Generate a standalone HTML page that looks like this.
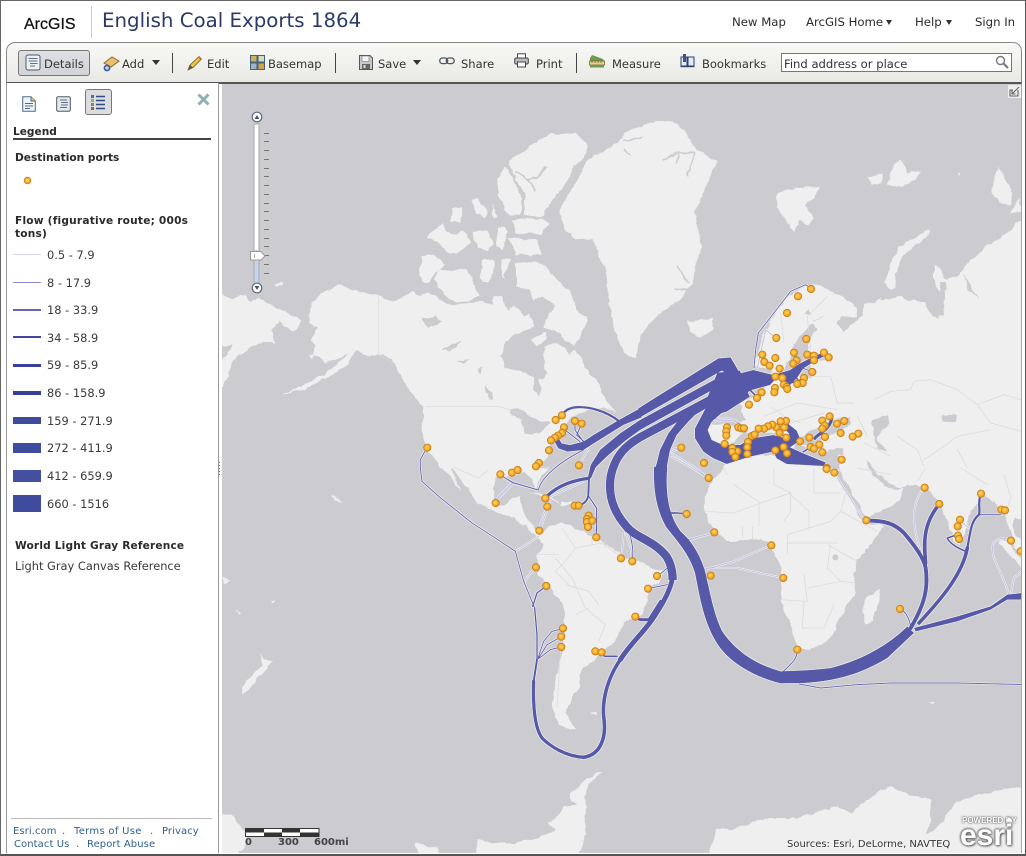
<!DOCTYPE html>
<html lang="en">
<head>
<meta charset="utf-8">
<title>English Coal Exports 1864</title>
<style>
html,body{margin:0;padding:0;background:#fff}
body{width:1026px;height:856px;position:relative;overflow:hidden;font-family:"DejaVu Sans","Liberation Sans",sans-serif;color:#333}
.a{position:absolute}
.t{position:absolute;white-space:nowrap;line-height:14px}
.frame{left:0;top:0;width:1024px;height:853px;border:1px solid #666;border-bottom:2px solid #555;border-right:1px solid #555}
.arc{left:24px;top:16px;font:16px/18px "Liberation Sans",sans-serif;color:#111;-webkit-text-stroke:.25px #111}
.sep0{left:91px;top:6px;width:1px;height:32px;background:#ccc}
.title{left:102px;top:9px;font-size:19.8px;line-height:24px;color:#2b3a67}
.nav{font-size:11.7px;color:#2a2a2a;top:15px}
.arrow{width:0;height:0;border-left:3.5px solid transparent;border-right:3.5px solid transparent;border-top:5px solid #333}
.toolbar{left:6px;top:42px;width:1014px;height:39px;border:1px solid #888;border-bottom:2px solid #555;border-radius:9px 9px 0 0;background:linear-gradient(#f8f8f6,#e9e9e4)}
.tb{font-size:11.5px;color:#333;top:57px}
.btn{left:18px;top:50px;width:70px;height:24px;border:1.5px solid #777;border-radius:3px;background:linear-gradient(#dfe0e3,#d2d3d7)}
.vs{top:53px;width:1px;height:20px;background:#444}
.search{left:781px;top:53px;width:229px;height:17px;border:1px solid #777;background:#fff}
.side{left:6px;top:83px;width:211px;height:770px;background:#fff;border-left:1px solid #999;border-right:1px solid #999}
.legend{font-size:11.4px;left:47px;color:#3a3a3a}
.b{font-size:10.6px;font-weight:bold;color:#2a2a2a}
.sw{left:13px;width:28px}
.foot{font-size:10px;letter-spacing:.08px;color:#31608f}
.icon{position:absolute;display:block}
</style>
</head>
<body>
<!-- MAP -->
<svg class="a" style="left:0;top:0" width="1026" height="856" viewBox="0 0 1026 856" xmlns="http://www.w3.org/2000/svg">
<defs>
<clipPath id="mc"><rect x="222" y="83" width="799" height="770"/></clipPath>
<radialGradient id="mg" cx=".45" cy=".45" r=".6"><stop offset="0" stop-color="#ffdc62"/><stop offset=".6" stop-color="#f5a92a"/><stop offset="1" stop-color="#d98a18"/></radialGradient>
<filter id="halo" filterUnits="userSpaceOnUse" x="0" y="0" width="1026" height="856">
<feMorphology in="SourceAlpha" operator="dilate" radius=".65" result="d"/>
<feFlood flood-color="#f2f2f2" result="f"/>
<feComposite in="f" in2="d" operator="in" result="h"/>
<feMerge><feMergeNode in="h"/><feMergeNode in="SourceGraphic"/></feMerge>
</filter>
<filter id="coast" filterUnits="userSpaceOnUse" x="200" y="60" width="840" height="810">
<feTurbulence type="fractalNoise" baseFrequency=".11" numOctaves="3" seed="7" result="n"/>
<feDisplacementMap in="SourceGraphic" in2="n" scale="5" xChannelSelector="R" yChannelSelector="G"/>
</filter>
</defs>
<g clip-path="url(#mc)">
<rect x="222" y="83" width="799" height="770" fill="#cbcbd0"/>

<!-- LAND -->
<g filter="url(#coast)">
<g fill="#efefef">
<g transform="translate(222,83) scale(.33333)">
<path d="M-9,615 L8,640 40,645 70,635 85,655 110,645 150,665 185,685 212,700 240,712 232,728 212,745 190,732 172,715 148,738 160,780 125,775 85,795 60,815 35,830 15,880 5,915 -9,918Z"/>
<path fill="#cbcbd0" d="M-9,795 L15,790 30,780 15,815 -9,835Z"/>
<path d="M272,660 L300,630 350,603 385,618 430,630 470,640 515,657 545,640 575,622 590,640 620,630 660,655 690,668 740,660 780,655 800,660 835,665 860,680 880,665 905,700 925,690 935,730 905,745 880,755 850,775 835,820 850,855 900,865 935,885 935,920 950,940 960,925 950,890 965,890 975,870 965,830 965,790 1000,780 1030,795 1040,815 1055,800 1075,820 1100,870 1135,905 1140,935 1160,965 1185,985 1140,975 1090,985 1050,1000 1030,1030 1000,1060 985,1090 985,1110 960,1140 945,1157 655,1157 640,1130 610,1100 605,1070 600,1020 605,975 590,955 560,920 530,870 510,830 480,815 440,820 405,805 380,810 345,830 310,840 275,810 280,790 265,770 290,735 258,720 265,690Z"/>
<path d="M400,805 L370,850 340,870 300,890 250,918 180,935 250,905 300,878 345,845 380,810Z"/>
<path d="M262,815 L280,812 272,826Z"/>
<path d="M152,605 L178,595 185,605 165,612Z"/>
<path d="M600,515 L640,520 670,545 640,570 625,600 600,600 590,575Z"/>
<path d="M650,560 L700,560 735,560 750,590 770,640 740,655 700,660 670,640 650,615 640,590Z"/>
<path d="M615,460 L660,420 670,440 690,455 725,445 745,480 710,510 680,510 640,475Z"/>
<path d="M750,450 L795,445 815,480 800,505 770,495Z"/>
<path d="M750,350 L770,345 800,390 790,405 760,390Z"/>
<path d="M810,365 L830,400 815,405Z"/>
<path d="M690,375 L720,370 715,420 685,415Z"/>
<path d="M825,435 L850,430 855,470 840,505 825,490Z"/>
<path d="M860,235 L940,180 990,150 1060,150 1095,185 1090,215 1050,260 1040,290 1000,340 970,380 960,405 905,395 910,330 880,290Z"/>
<path d="M825,290 L850,250 880,300 900,350 895,395 860,395 830,340Z"/>
<path d="M870,415 L900,405 960,410 985,420 955,455 880,450Z"/>
<path d="M860,465 L945,470 960,515 880,515Z"/>
<path d="M880,540 L940,535 975,555 1010,590 1050,630 1060,680 1095,700 1085,740 1060,790 1030,770 1000,740 965,735 975,700 1000,670 960,640 935,650 925,620 885,610Z"/>
<path d="M780,530 L820,530 800,600 775,590Z"/>
<path d="M835,530 L865,530 845,590Z"/>
<path d="M810,640 L840,640 850,680 815,670Z"/>
<path d="M925,770 L970,745 975,770 945,790Z"/>
<path d="M1206,165 L1160,195 1100,230 1060,300 1010,385 1030,440 1060,470 1110,470 1150,560 1160,640 1170,720 1210,815Z"/>
<g fill="#cbcbd0">
<path d="M860,985 L890,975 920,1000 945,1010 985,1020 955,1045 930,1055 910,1050 895,1010Z"/>
<path d="M790,905 L815,940 810,955 790,925Z"/>
<path d="M660,800 L690,785 722,770 700,792 680,806Z"/>
<path d="M600,712 L640,695 655,720 620,735Z"/>
<path d="M705,838 L745,826 725,842Z"/>
<path d="M770,855 L782,850 775,875Z"/>
</g>
<path fill="none" stroke="#cbcbd0" stroke-width="5" d="M880,265 L915,290 945,285 975,250 M915,290 L940,325 M1060,245 L1010,385"/>
</g>
<g transform="translate(624,83) scale(.33333)">
<path d="M-3,150 L60,125 110,112 160,120 190,160 205,185 240,215 280,235 260,280 235,340 210,390 235,490 215,540 205,600 170,650 120,680 80,720 50,760 35,825 -3,810Z"/>
<path fill="none" stroke="#cbcbd0" stroke-width="5" d="M115,228 L165,208 215,208 M165,208 L160,240 M215,208 L190,280 M0,175 L55,165 M0,195 L20,220 M150,615 L200,625 M160,550 L195,600"/>
<path d="M460,330 L520,315 590,310 565,350 545,370 570,410 550,425 525,410 510,450 490,420 460,370Z"/>
<path d="M185,715 L215,710 265,708 270,735 230,765 200,745Z"/>
<path d="M1100,320 L1125,255 1145,290 1165,330 1160,365 1130,360Z"/>
<path d="M1160,395 L1185,345 1195,385Z"/>
<path d="M730,285 L780,270 770,305 745,305Z"/>
<path d="M800,265 L830,225 850,270 890,265 870,295 830,310 790,310Z"/>
<path d="M1000,270 L1010,270 1005,278Z"/>
<path d="M780,600 L800,540 825,490 880,460 915,440 915,455 870,490 830,530 815,575 815,610 800,620Z"/>
<path d="M755,650 L770,645 765,660Z"/>
</g>
<g transform="translate(222,468) scale(.33333)">
<path d="M692,-3 L720,40 750,75 765,105 820,130 870,150 915,175 945,205 955,200 945,185 920,160 905,135 895,110 895,85 870,90 850,115 830,115 820,95 815,60 820,30 850,25 905,15 925,25 945,65 950,35 985,-3Z"/>
<path d="M660,-3 L690,35 718,72 705,40 690,15 688,-3Z"/>
<path d="M920,72 L960,78 1010,100 1020,108 975,90Z"/>
<path d="M1020,100 L1050,100 1055,110 1020,112Z"/>
<path d="M945,205 L960,195 985,175 1020,165 1050,175 1090,195 1130,215 1170,240 1206,270 1256,280 1306,305 1326,310 1311,345 1281,360 1276,400 1256,440 1206,465 1180,520 1130,560 1100,590 1070,620 1075,650 1050,690 1030,730 1050,770 1065,780 1045,785 1010,770 990,720 1000,640 1020,560 1030,480 1025,410 985,360 950,320 945,260 965,230Z"/>
<path d="M1102,738 L1125,732 1125,742Z"/>
<path d="M115,555 L125,575 150,580 130,610 115,620 95,650 65,680 58,660 80,630 110,605 120,590Z"/>
<path d="M-9,1035 L30,1040 50,1070 75,1100 75,1125 45,1165 -9,1165Z"/>
<path d="M1145,905 L1090,935 1045,975 1040,990 1065,1010 1025,1015 1010,1040 980,1065 1000,1085 975,1095 950,1110 880,1125 800,1125 768,1110 765,1165 1060,1165 1085,1130 1090,1060 1090,990 1100,950Z"/>
<path d="M580,1125 L610,1135 650,1140 660,1165 590,1165Z"/>
<path d="M322,80 L340,90 360,100 345,100Z"/>
<path d="M145,400 L160,397 155,407Z"/>
<path d="M40,422 L60,437 55,442Z"/>
<path d="M2,325 L25,340 10,348Z"/>
</g>
<g transform="translate(624,468) scale(.33333)">
<path d="M765,360 L770,385 745,460 725,465 715,430 725,395Z"/>
<path d="M250,1165 L280,1085 340,1080 430,1050 520,1050 640,1015 680,1035 770,965 800,955 860,985 925,995 920,1060 905,1100 930,1090 1000,1000 1080,975 1190,955 1215,950 1215,1165Z"/>
<path d="M915,702 L930,702 925,712Z"/>
<path d="M1135,212 L1160,225 1195,285 1195,300 1160,265 1125,225Z"/>
</g>
<path d="M754,366 L762,336 771,320 787,296 806,285 821,285 829,291 841,296 856,306 857,318 841,316 837,323 842,333 851,326 862,316 864,305 877,300 887,300 901,296 909,301 924,301 931,316 939,318 941,296 934,280 934,265 941,270 944,280 957,276 967,263 987,246 1004,235 1021,220 1036,216 1036,566 1018,555 1012,535 1008,525 1006,518 1000,508 985,495 980,490 980,498 971,511 966,531 959,546 954,540 949,525 939,501 926,488 907,485 900,488 894,486 880,475 872,466 866,460 868,468 876,478 884,484 895,490 903,488 900,500 884,510 867,518 842,478 838,470 842,460 835,452 820,452 808,450 800,445 803,437 795,437 796,448 788,450 785,440 775,434 760,432 745,432 735,440 725,447 718,452 710,448 700,447 697,432 702,424 725,424 737,427 745,420 741,405 730,405 725,400 748,400 762,392 770,380 772,370 Z"/>
<path d="M725,463 L740,457 773,455 783,457 790,463 827,465 838,470 837,478 864,523 884,525 881,531 857,561 854,575 856,591 841,615 831,638 811,650 797,648 791,625 781,600 781,568 771,545 761,538 737,541 727,541 711,526 704,511 706,498 709,485 724,468Z"/>
</g>
<!-- inland / seas over land -->
<g fill="#cbcbd0">
<path d="M782,372 L790,360 793,345 805,330 812,324 816,328 808,345 808,352 825,354 827,358 810,362 812,378 800,376 786,380Z"/>
<path d="M1014,518 L1030,520 1030,545 1014,535Z"/>
<path d="M872,420 L888,415 890,423 881,430 877,440 887,450 877,450 874,437Z"/>
<path d="M942,416 L957,415 954,422 944,422Z"/>
<path d="M804,446 L801,436 811,430 824,426 840,418 851,417 851,424 838,432 824,437 814,445Z"/>
<path d="M828,450 L842,447 843,455 830,454Z"/>
<path d="M941,282 L946,282 943,316 938,316Z"/>
<path d="M963,273 L972,290 980,300 968,290Z"/>
<path d="M838,470 L842,476 868,520 880,523 866,524 860,517Z"/>
<path d="M842,316 L850,318 846,330 838,322Z"/>
<path d="M825,315 L811,325 808,330 815,321Z"/>
<path d="M808,309 L812,315 804,315Z"/>
</g>
</g>
<!-- borders -->
<g fill="none" stroke="#d8d8da" stroke-width="2">
<g transform="translate(222,83) scale(.33333)"><path d="M470,640 L470,815 510,840 M612,970 L830,970 890,990"/></g>
<g transform="translate(624,83) scale(.33333)"><path d="M750,950 L800,925 860,920 870,895 920,890 1000,920 1060,965 1140,935 1190,950 M1060,965 L1100,1020 1190,1045 M900,1130 L960,1090 1000,1060 1100,1040 M720,1080 L800,1120 M520,880 L620,880 640,960 690,960 M610,640 L550,700 560,800 M470,690 L480,780 M420,1000 L520,960 640,980 M500,1020 L600,990 M440,970 L480,1000 530,1020 M700,1000 L730,1060 M820,1060 L880,1100 900,1150 M1000,1100 L1030,1155"/></g>
<g transform="translate(222,468) scale(.33333)"><path d="M695,-2 L770,30 800,5 M1020,180 L1060,240 1140,225 M1000,270 L1050,330 1090,420 1150,470 1130,520 M950,260 L1010,260 M1030,350 L1100,370 1130,410 M1060,440 L1100,420 M1020,480 L1010,640 1005,720 M1060,240 L1030,280 1000,310 1040,350 M1140,225 L1190,260 M1110,180 L1110,230 M1150,210 L1150,240"/></g>
<g transform="translate(624,468) scale(.33333)"><path d="M450,0 L450,50 500,75 500,130 480,160 M570,0 L570,75 650,75 M330,50 L410,105 500,75 M240,130 L330,135 410,105 M405,105 L405,175 M495,75 L555,130 555,180 620,160 650,130 665,75 M555,180 L490,200 490,260 M490,225 L640,225 M620,230 L610,300 650,340 695,345 M540,320 L550,400 470,395 M550,360 L600,350 650,340 M540,400 L535,480 600,480 630,410 M610,230 L700,280 M650,130 L760,190 M700,0 L800,20 M905,0 L880,40 M1010,0 L1090,50 M1140,20 L1160,90 1150,120 M310,20 L300,0 M355,175 L355,210 M385,175 L385,215"/><circle cx="634" cy="268" r="9" fill="#cbcbd0" stroke="none"/></g>
</g>

<!-- FLOWS -->
<g filter="url(#halo)">
<g fill="none" stroke="#b9bade" stroke-width="2.5" stroke-linecap="round" stroke-linejoin="round">
<g transform="translate(480,380) scale(.33333)">
<path d="M200,355 L310,305 M205,380 L180,450 M325,208 L296,255 M705,457 L610,485 M575,220 L640,260 L686,295 M432,450 L424,535 M575,215 L603,203 M100,310 L50,360 M170,260 L205,265"/>
</g>
<g transform="translate(624,468) scale(.33333)">
<path d="M240,305 L330,280 440,232 M240,300 L340,300 478,330 M190,215 L270,195 M640,30 L720,155 M900,60 C865,100 860,160 890,250 M1155,380 C1130,300 1105,280 1105,240 C1105,215 1130,205 1160,215 M1160,380 L1170,330 1200,305 M0,180 L20,240 25,280 M1005,155 L1035,180"/>
</g>
<g transform="translate(222,468) scale(.33333)">
<path d="M907,340 L930,310 942,298 M880,250 L920,225 950,205 M950,188 L965,140 985,100 M820,105 L830,85 870,45 M836,20 L870,45 945,65 M945,65 L950,40"/>
</g>
<g transform="translate(640,340) scale(.33333)">
<path d="M215,245 C250,240 290,235 305,260 M215,238 C240,230 290,232 300,255 M95,350 L150,380 205,415 M80,330 L123,323"/>
</g>
<g transform="translate(624,83) scale(.33333)">
<path d="M400,855 L425,740 455,765"/>
</g>
</g>
<g fill="none" stroke="#6365b0" stroke-width="3" stroke-linecap="round" stroke-linejoin="round">
<g transform="translate(480,380) scale(.33333)">
<path d="M175,330 C185,290 240,245 310,210 M175,330 L100,308 60,285 M620,400 L545,395 M445,450 C460,490 460,520 457,543"/>
</g>
<g transform="translate(624,83) scale(.33333)"><path d="M390,855 L395,800 403,750 500,625 545,605 560,615"/></g>
<g transform="translate(222,468) scale(.33333)">
<path d="M938,420 L905,340 880,250 820,210 750,165 650,85 600,40 595,0"/>
<path d="M948,570 L965,520 990,490 1022,482 M950,570 L975,530 1017,507 M950,572 L985,545 1017,537"/>
</g>
<g transform="translate(222,83) scale(.33333)"><path d="M595,1157 L595,1130 615,1094"/></g>
<g transform="translate(624,468) scale(.33333)">
<path d="M525,648 L590,660 700,650 800,645 1000,645 1210,650 M828,423 C845,430 855,450 860,475 M110,135 L188,138 M100,325 L130,300 M72,362 L130,350 M1065,140 L1130,140"/>
</g>
</g>
<g fill="none" stroke="#5659a8" stroke-linecap="butt" stroke-linejoin="round">
<g transform="translate(480,380) scale(.33333)">
<path stroke-width="25" d="M780,12 L480,172 C440,195 405,225 392,290 C385,340 395,390 440,440 C470,475 520,480 560,530 C575,555 578,580 578,600"/>
</g>
</g>
<g fill="#5659a8" stroke="none">
<g transform="translate(640,340) scale(.33333)">
<path d="M-5,205 L235,55 272,52 300,100 270,105 245,92 -5,235Z"/>
<path d="M45,384 L50,370 60,330 85,280 120,235 165,195 215,165 250,135 290,165 215,195 165,225 145,245 110,285 90,330 80,384Z"/>
<path d="M215,170 L255,110 300,100 340,90 400,105 450,90 480,70 520,50 555,35 560,45 530,60 490,85 470,115 450,135 435,125 415,108 390,135 335,150 300,170 270,200 225,215 165,265Z"/>
<path d="M232,98 L300,92 325,160 250,200 195,190Z"/>
<path d="M215,150 L300,120 330,170 260,215 190,235Z"/>
<path d="M220,220 L195,230 165,265 165,295 190,335 220,355 260,372 330,350 400,335 410,355 440,372 550,378 558,368 490,340 450,322 482,300 470,272 440,248 428,260 448,282 440,296 400,285 350,293 330,298 300,315 250,315 215,300 203,270 215,245 250,215Z"/>
</g>
<g transform="translate(480,380) scale(.33333)">
<path d="M485,82 L420,118 340,165 310,185 270,195 245,190 238,178 222,182 235,205 262,215 310,210 345,188 430,135 485,112Z"/>
<path d="M760,-32 L480,120 420,160 360,210 332,255 323,295 333,295 347,262 380,230 435,183 480,150 760,-5Z"/>
</g>
<g transform="translate(624,468) scale(.33333)">
<path d="M90,-3 C88,60 95,120 125,175 C155,215 195,255 213,315 C228,390 240,470 285,535 C325,590 400,630 470,646 L540,645 C620,640 700,625 790,570 L870,495 850,475 C800,525 720,575 620,600 C560,608 510,608 470,610 C400,590 340,555 295,490 C270,440 260,380 250,340 C240,280 210,225 170,190 C140,150 122,90 130,-3Z"/>
<path d="M870,480 L1000,445 1100,415 1150,380 1210,373 1210,395 1150,395 1100,425 1000,460 875,490Z"/>
</g>
</g>
<g fill="none" stroke="#5659a8" stroke-linecap="round" stroke-linejoin="round">
<g transform="translate(480,380) scale(.33333)">
<path stroke-width="7" d="M415,122 C380,95 330,78 285,82 C265,85 255,92 245,105"/>
<path stroke-width="3" d="M310,185 L285,150 285,125 M312,185 L290,165 305,132 M300,185 L255,150"/>
<path stroke-width="10" d="M325,295 C290,300 240,310 197,352"/>
<path stroke-width="6" d="M327,295 L325,345 C322,365 310,372 295,378"/>
<path stroke-width="3.5" d="M327,350 L350,385 350,440 348,470"/>
</g>
<g transform="translate(222,468) scale(.33333)">
<path stroke-width="15" d="M1352,310 C1355,345 1330,395 1300,440 C1270,490 1230,520 1195,575"/>
<path stroke-width="11" d="M1195,575 C1160,625 1140,690 1145,745 C1155,810 1135,860 1085,868"/>
<path stroke-width="10" d="M1085,868 C1030,865 985,835 960,810 C935,775 933,700 935,640"/>
<path stroke-width="6" d="M935,640 L945,575"/>
<path stroke-width="4" d="M945,575 L945,500 938,420"/>
<path stroke-width="4" d="M932,415 L945,375 972,355"/>
<path stroke-width="5" d="M1120,552 L1150,565 1185,565"/>
</g>
<g transform="translate(640,340) scale(.33333)">
<path stroke-width="10" d="M525,295 C528,285 570,270 575,235"/>
<path stroke-width="5" d="M490,335 L515,320 M470,115 L480,130 M440,130 L470,125 M330,150 L345,165 M470,130 L490,110"/>
<path stroke-width="3" d="M490,85 L515,95"/>
</g>
<g transform="translate(624,468) scale(.33333)">
<path stroke-width="12" d="M860,480 C895,420 915,370 905,300 C900,270 870,230 840,195 C810,165 780,158 730,158"/>
<path stroke-width="11" d="M905,285 C900,230 895,170 945,110"/>
<path stroke-width="11" d="M885,465 C950,395 1015,320 1030,240"/>
<path stroke-width="7" d="M1030,240 C1040,190 1040,160 1065,140 C1070,120 1060,110 1070,78"/>
<path stroke-width="5" d="M1025,250 C1000,240 975,225 970,210 L1000,200"/>
<path stroke-width="9" d="M35,450 L50,455 75,455 110,400"/>
<path stroke-width="3" d="M478,610 C510,580 520,570 520,545"/>
</g>
</g>
</g>

<!-- MARKERS -->
<g fill="url(#mg)" stroke="#c47f1d" stroke-width="2.4">
<g transform="translate(222,83) scale(.33333)">
<circle cx="616" cy="1094" r="11"/><circle cx="1001" cy="1011" r="11"/><circle cx="1020" cy="997" r="11"/><circle cx="1059" cy="1014" r="11"/><circle cx="1079" cy="1022" r="11"/><circle cx="1026" cy="1033" r="11"/><circle cx="1020" cy="1050" r="11"/><circle cx="1008" cy="1058" r="11"/><circle cx="999" cy="1064" r="11"/><circle cx="987" cy="1072" r="11"/><circle cx="981" cy="1102" r="11"/><circle cx="951" cy="1140" r="11"/><circle cx="942" cy="1150" r="11"/><circle cx="1071" cy="1147" r="11"/>
</g>
<g transform="translate(624,83) scale(.33333)">
<circle cx="561" cy="618" r="11"/><circle cx="522" cy="640" r="11"/><circle cx="489" cy="690" r="11"/><circle cx="457" cy="765" r="11"/><circle cx="547" cy="768" r="11"/><circle cx="415" cy="815" r="11"/><circle cx="421" cy="837" r="11"/><circle cx="437" cy="848" r="11"/><circle cx="454" cy="825" r="11"/><circle cx="510" cy="809" r="11"/><circle cx="518" cy="832" r="11"/><circle cx="508" cy="842" r="11"/><circle cx="550" cy="815" r="11"/><circle cx="570" cy="818" r="11"/><circle cx="570" cy="832" r="11"/><circle cx="600" cy="809" r="11"/><circle cx="614" cy="823" r="11"/><circle cx="565" cy="867" r="11"/><circle cx="467" cy="857" r="11"/><circle cx="454" cy="881" r="11"/><circle cx="475" cy="885" r="11"/><circle cx="540" cy="885" r="11"/><circle cx="536" cy="900" r="11"/><circle cx="520" cy="903" r="11"/><circle cx="480" cy="905" r="11"/><circle cx="488" cy="912" r="11"/><circle cx="490" cy="918" r="11"/><circle cx="453" cy="915" r="11"/><circle cx="451" cy="928" r="11"/><circle cx="413" cy="928" r="11"/><circle cx="399" cy="945" r="11"/><circle cx="375" cy="965" r="11"/><circle cx="617" cy="1000" r="11"/><circle cx="595" cy="1013" r="11"/><circle cx="602" cy="1028" r="11"/><circle cx="595" cy="1037" r="11"/><circle cx="661" cy="1014" r="11"/><circle cx="639" cy="1022" r="11"/><circle cx="650" cy="1050" r="11"/><circle cx="703" cy="1052" r="11"/><circle cx="686" cy="1061" r="11"/><circle cx="603" cy="1062" r="11"/><circle cx="586" cy="1085" r="11"/><circle cx="556" cy="1064" r="11"/><circle cx="528" cy="1075" r="11"/><circle cx="560" cy="1092" r="11"/><circle cx="570" cy="1097" r="11"/><circle cx="595" cy="1108" r="11"/><circle cx="653" cy="1130" r="11"/><circle cx="487" cy="1064" r="11"/><circle cx="479" cy="1092" r="11"/><circle cx="489" cy="1111" r="11"/><circle cx="454" cy="1102" r="11"/><circle cx="481" cy="1033" r="11"/><circle cx="486" cy="1014" r="11"/><circle cx="470" cy="1015" r="11"/><circle cx="457" cy="1033" r="11"/><circle cx="467" cy="1050" r="11"/><circle cx="445" cy="1025" r="11"/><circle cx="432" cy="1030" r="11"/><circle cx="420" cy="1037" r="11"/><circle cx="404" cy="1037" r="11"/><circle cx="384" cy="1059" r="11"/><circle cx="392" cy="1055" r="11"/><circle cx="372" cy="1077" r="11"/><circle cx="370" cy="1093" r="11"/><circle cx="370" cy="1113" r="11"/><circle cx="340" cy="1105" r="11"/><circle cx="325" cy="1095" r="11"/><circle cx="325" cy="1107" r="11"/><circle cx="334" cy="1122" r="11"/><circle cx="302" cy="1083" r="11"/><circle cx="309" cy="1033" r="11"/><circle cx="307" cy="1045" r="11"/><circle cx="307" cy="1058" r="11"/><circle cx="343" cy="1033" r="11"/><circle cx="352" cy="1036" r="11"/><circle cx="360" cy="1036" r="11"/><circle cx="172" cy="1094" r="11"/><circle cx="240" cy="1140" r="11"/><circle cx="608" cy="1155" r="11"/>
</g>
<g transform="translate(222,468) scale(.33333)">
<circle cx="835" cy="19" r="11"/><circle cx="870" cy="14" r="11"/><circle cx="887" cy="6" r="11"/><circle cx="821" cy="105" r="11"/><circle cx="970" cy="91" r="11"/><circle cx="976" cy="116" r="11"/><circle cx="1058" cy="113" r="11"/><circle cx="1070" cy="113" r="11"/><circle cx="952" cy="188" r="11"/><circle cx="1100" cy="143" r="11"/><circle cx="1095" cy="153" r="11"/><circle cx="1095" cy="162" r="11"/><circle cx="1111" cy="158" r="11"/><circle cx="1098" cy="177" r="11"/><circle cx="1123" cy="208" r="11"/><circle cx="1197" cy="271" r="11"/><circle cx="942" cy="298" r="11"/><circle cx="973" cy="354" r="11"/><circle cx="1023" cy="481" r="11"/><circle cx="1018" cy="506" r="11"/><circle cx="1018" cy="537" r="11"/><circle cx="1120" cy="550" r="11"/><circle cx="1139" cy="553" r="11"/>
</g>
<g transform="translate(624,468) scale(.33333)">
<circle cx="608" cy="3" r="11"/><circle cx="631" cy="14" r="11"/><circle cx="254" cy="30" r="11"/><circle cx="188" cy="138" r="11"/><circle cx="271" cy="193" r="11"/><circle cx="442" cy="232" r="11"/><circle cx="25" cy="280" r="11"/><circle cx="99" cy="324" r="11"/><circle cx="72" cy="362" r="11"/><circle cx="34" cy="446" r="11"/><circle cx="260" cy="323" r="11"/><circle cx="478" cy="330" r="11"/><circle cx="520" cy="545" r="11"/><circle cx="828" cy="423" r="11"/><circle cx="727" cy="157" r="11"/><circle cx="902" cy="59" r="11"/><circle cx="946" cy="108" r="11"/><circle cx="1071" cy="77" r="11"/><circle cx="1132" cy="125" r="11"/><circle cx="1143" cy="127" r="11"/><circle cx="1008" cy="155" r="11"/><circle cx="1001" cy="175" r="11"/><circle cx="1002" cy="203" r="11"/><circle cx="1005" cy="213" r="11"/><circle cx="1161" cy="218" r="11"/><circle cx="1190" cy="250" r="11"/>
</g>
</g>

<!-- zoom slider -->
<rect x="254" y="124" width="5" height="127" fill="#fff" stroke="#aaa" stroke-width="1"/>
<rect x="254" y="260" width="5" height="24" fill="#c4d4f0" stroke="#aaa" stroke-width="1"/>
<g fill="#777">
<rect x="264" y="133" width="5" height="1"/><rect x="264" y="141" width="5" height="1"/><rect x="264" y="150" width="5" height="1"/><rect x="264" y="159" width="5" height="1"/><rect x="264" y="168" width="5" height="1"/><rect x="264" y="176" width="5" height="1"/><rect x="264" y="185" width="5" height="1"/><rect x="264" y="194" width="5" height="1"/><rect x="264" y="203" width="5" height="1"/><rect x="264" y="211" width="5" height="1"/><rect x="264" y="220" width="5" height="1"/><rect x="264" y="229" width="5" height="1"/><rect x="264" y="238" width="5" height="1"/><rect x="264" y="246" width="5" height="1"/><rect x="264" y="255" width="5" height="1"/><rect x="264" y="264" width="5" height="1"/><rect x="264" y="273" width="5" height="1"/>
</g>
<circle cx="257" cy="117" r="4.8" fill="#fff" stroke="#5a6a82" stroke-width="1.2"/><path d="M254.5,119 L257,115 259.5,119Z" fill="#555"/>
<circle cx="257" cy="288" r="4.8" fill="#fff" stroke="#5a6a82" stroke-width="1.2"/><path d="M254.5,286 L257,290 259.5,286Z" fill="#555"/>
<path d="M250.5,251.5 H261 L265,256 261,260 H250.5Z" fill="#fff" stroke="#999" stroke-width="1"/><rect x="254" y="254" width="1" height="4" fill="#bbb"/>

<!-- expand icon -->
<rect x="1008" y="85" width="13" height="13" fill="#ededed"/>
<g fill="none" stroke="#666" stroke-width="1.1"><path d="M1018,90 V96 H1010 V90 H1013"/><path d="M1012,94 L1019,87 M1012,90.5 V94 H1015.5"/></g>

<!-- scale bar -->
<rect x="245.5" y="828.5" width="73.5" height="8" fill="#fff" stroke="#333"/>
<rect x="246" y="829" width="18" height="3.5" fill="#333"/><rect x="264" y="832.5" width="18" height="3.5" fill="#333"/><rect x="282" y="829" width="18" height="3.5" fill="#333"/><rect x="300" y="832.5" width="18.5" height="3.5" fill="#333"/>
</svg>

<div class="t" style="left:245px;top:836px;font-size:10px;font-weight:bold;color:#444">0</div>
<div class="t" style="left:278px;top:836px;font-size:10px;font-weight:bold;color:#444">300</div>
<div class="t" style="left:314px;top:836px;font-size:10px;font-weight:bold;color:#444">600mi</div>
<div class="t" style="left:787px;top:838px;font-size:10px;color:#333;text-shadow:0 0 2px #fff">Sources: Esri, DeLorme, NAVTEQ</div>
<div class="t" style="left:962px;top:815px;font:bold 8px/12px 'Liberation Sans',sans-serif;color:#fff;text-shadow:0 0 2px #555,0 0 1px #555">POWERED BY</div>
<div class="a" style="left:1006px;top:818px;width:6px;height:6px;border-radius:50%;background:#fff;box-shadow:0 0 2px #555"></div>
<div class="t" style="left:960px;top:819px;font:bold 30px/34px 'Liberation Sans',sans-serif;color:#fff;text-shadow:1px 1px 2px #555,-1px 0 2px #777,0 -1px 2px #777">esri</div>

<!-- CHROME -->
<div class="a frame"></div>
<div class="a" style="left:1021px;top:83px;width:1px;height:770px;background:#aaa"></div>
<div class="t arc">ArcGIS</div>
<div class="a sep0"></div>
<div class="t title">English Coal Exports 1864</div>
<div class="t nav" style="left:732px">New Map</div>
<div class="t nav" style="left:806px">ArcGIS Home</div>
<div class="a arrow" style="left:886px;top:20px"></div>
<div class="t nav" style="left:915px">Help</div>
<div class="a arrow" style="left:946px;top:20px"></div>
<div class="t nav" style="left:975px">Sign In</div>

<div class="a toolbar"></div>
<div class="a btn"></div>
<svg class="icon" style="left:25px;top:54px" width="16" height="17" viewBox="0 0 16 17"><rect x="1" y="1" width="14" height="15" rx="2" fill="#eef0f2" stroke="#4d5a68"/><path d="M3.5,4.5H12.5M3.5,7H12.5M5,9.5H12.5M5,12H10" stroke="#5a6f88" fill="none"/></svg>
<div class="t tb" style="left:44px">Details</div>
<svg class="icon" style="left:103px;top:55px" width="17" height="17" viewBox="0 0 17 17"><path d="M1,8 L9,2 16,6 8,12Z" fill="#e8bf6a" stroke="#8a6c2a"/><circle cx="4" cy="13" r="3.4" fill="#3c5ca8"/><path d="M2,13H6M4,11V15" stroke="#fff"/></svg>
<div class="t tb" style="left:122px">Add</div>
<div class="a arrow" style="left:152px;top:60px;border-left-width:4px;border-right-width:4px"></div>
<div class="a vs" style="left:172px"></div>
<svg class="icon" style="left:187px;top:55px" width="16" height="16" viewBox="0 0 16 16"><path d="M1,15 L3,10 12,1.5 14.5,4 6,12.5Z" fill="#eec04c" stroke="#7a5f1f" stroke-width=".8"/><path d="M1,15 L3,10 6,12.5Z" fill="#555"/><path d="M12,1.5 L14.5,4 13.5,5 11,2.5Z" fill="#d06a50"/></svg>
<div class="t tb" style="left:207px">Edit</div>
<svg class="icon" style="left:250px;top:55px" width="15" height="15" viewBox="0 0 15 15"><rect x=".5" y=".5" width="6.5" height="6.5" fill="#c8b45c" stroke="#47607c"/><rect x="8" y=".5" width="6.5" height="6.5" fill="#cfe0b4" stroke="#47607c"/><rect x=".5" y="8" width="6.5" height="6.5" fill="#9eb2ca" stroke="#47607c"/><rect x="8" y="8" width="6.5" height="6.5" fill="#d2a648" stroke="#47607c"/></svg>
<div class="t tb" style="left:268px">Basemap</div>
<div class="a vs" style="left:335px"></div>
<svg class="icon" style="left:359px;top:55px" width="14" height="15" viewBox="0 0 14 15"><path d="M.5,.5H11L13.5,3V14.5H.5Z" fill="#c6c8cc" stroke="#555"/><rect x="3" y="1" width="7" height="5.5" fill="#f4f4f4" stroke="#777" stroke-width=".6"/><rect x="3" y="9" width="8" height="5" fill="#666"/><rect x="4.5" y="10" width="2" height="3" fill="#ddd"/></svg>
<div class="t tb" style="left:378px">Save</div>
<div class="a arrow" style="left:413px;top:60px;border-left-width:4px;border-right-width:4px"></div>
<svg class="icon" style="left:439px;top:57px" width="16" height="8" viewBox="0 0 16 8"><rect x=".7" y="1" width="8" height="5.6" rx="2.8" fill="none" stroke="#4e5662" stroke-width="1.3"/><rect x="7.2" y="1" width="8" height="5.6" rx="2.8" fill="none" stroke="#4e5662" stroke-width="1.3"/></svg>
<div class="t tb" style="left:461px">Share</div>
<svg class="icon" style="left:514px;top:53px" width="15" height="15" viewBox="0 0 15 15"><rect x="3.5" y=".8" width="8" height="5" fill="#fff" stroke="#444"/><rect x=".7" y="5" width="13.6" height="6" rx="1.5" fill="#b9bcc2" stroke="#444"/><rect x="3.5" y="9" width="8" height="5" fill="#fff" stroke="#444"/></svg>
<div class="t tb" style="left:536px">Print</div>
<div class="a vs" style="left:576px"></div>
<svg class="icon" style="left:589px;top:54px" width="16" height="15" viewBox="0 0 16 15"><path d="M1,4 L3,1 14,5 15,7 1,7Z" fill="#6f9a50"/><rect x=".5" y="7" width="15" height="4" fill="#e6cf94" stroke="#6c5a2a" stroke-width=".7"/><path d="M3,7V9M6,7V9M9,7V9M12,7V9" stroke="#6c5a2a" stroke-width=".7"/><rect x="1" y="11.5" width="14" height="2" fill="#6f9a50"/></svg>
<div class="t tb" style="left:612px">Measure</div>
<svg class="icon" style="left:680px;top:53px" width="15" height="15" viewBox="0 0 15 15"><path d="M1,4H7V13H1ZM8,4H14V13H8Z" fill="#e4ebf6" stroke="#2e4272"/><rect x="3" y="1" width="3" height="8" fill="#3a5294"/><path d="M.5,13.5H14.5" stroke="#2e4272" stroke-width="1.4"/></svg>
<div class="t tb" style="left:702px">Bookmarks</div>
<div class="a search"></div>
<div class="t" style="left:784px;top:57px;font-size:11.6px;color:#333">Find address or place</div>
<svg class="icon" style="left:995px;top:55px" width="14" height="14" viewBox="0 0 14 14"><circle cx="5.5" cy="5.5" r="4" fill="none" stroke="#777" stroke-width="1.4"/><path d="M8.5,8.5L13,13" stroke="#777" stroke-width="2"/></svg>

<!-- SIDEBAR -->
<div class="a side"></div>
<svg class="icon" style="left:22px;top:96px" width="14" height="16" viewBox="0 0 14 16"><path d="M.7,.7H9L13.3,5V15.3H.7Z" fill="#f0f4f8" stroke="#4d6a88"/><path d="M9,.7V5H13.3" fill="#e4c860" stroke="#4d6a88"/><path d="M3,7.5H11M3,10H11M3,12.5H8" stroke="#4d6a88" fill="none"/></svg>
<svg class="icon" style="left:56px;top:96px" width="15" height="16" viewBox="0 0 15 16"><rect x=".7" y=".7" width="13.6" height="14.6" rx="1.5" fill="#e6e8ea" stroke="#4d5a68"/><path d="M4,4H11M5,6.5H12M5,9H12M4,11.5H11" stroke="#5a6f88" fill="none"/></svg>
<div class="a" style="left:85px;top:89px;width:25px;height:24px;border:1.5px solid #777;border-radius:3px;background:#dcdde0"></div>
<svg class="icon" style="left:91px;top:95px" width="15" height="15" viewBox="0 0 15 15"><rect x="0" y="0" width="3" height="3" fill="#3a78b0"/><rect x="0" y="4" width="3" height="3" fill="#c6a030"/><rect x="0" y="8" width="3" height="3" fill="#6a9a50"/><rect x="0" y="12" width="3" height="3" fill="#b06030"/><path d="M5,1.5H14M5,5.5H14M5,9.5H14M5,13.5H14" stroke="#334a80" stroke-width="1.4"/></svg>
<svg class="icon" style="left:197px;top:93px" width="13" height="13" viewBox="0 0 13 13"><path d="M1.5,1.5 L11.5,11.5M11.5,1.5 L1.5,11.5" stroke="#8fb0b0" stroke-width="3"/></svg>

<div class="t b" style="left:13px;top:125px">Legend</div>
<div class="a" style="left:13px;top:138px;width:198px;height:2px;background:#444"></div>
<div class="t b" style="left:15px;top:151px">Destination ports</div>
<svg class="icon" style="left:23px;top:176px" width="9" height="9" viewBox="0 0 9 9"><circle cx="4.5" cy="4.5" r="3.3" fill="#f5a92a" stroke="#c47f1d" stroke-width=".8"/><circle cx="4.3" cy="4.3" r="1.4" fill="#ffdc62"/></svg>
<div class="t b" style="left:15px;top:214px;letter-spacing:.21px">Flow (figurative route; 000s</div>
<div class="t b" style="left:15px;top:227px;letter-spacing:.21px">tons)</div>

<div class="a sw" style="top:254px;height:1px;background:#d8d8f0"></div><div class="t legend" style="top:248px">0.5 - 7.9</div>
<div class="a sw" style="top:282px;height:1px;background:#8587c6"></div><div class="t legend" style="top:276px">8 - 17.9</div>
<div class="a sw" style="top:309px;height:2px;background:#6567b3"></div><div class="t legend" style="top:303px">18 - 33.9</div>
<div class="a sw" style="top:336px;height:2px;background:#4347a0"></div><div class="t legend" style="top:331px">34 - 58.9</div>
<div class="a sw" style="top:364px;height:3px;background:#3b409b"></div><div class="t legend" style="top:358px">59 - 85.9</div>
<div class="a sw" style="top:391px;height:4px;background:#373e99"></div><div class="t legend" style="top:386px">86 - 158.9</div>
<div class="a sw" style="top:417px;height:7px;background:#3f4c9e"></div><div class="t legend" style="top:414px">159 - 271.9</div>
<div class="a sw" style="top:443px;height:10px;background:#3f4c9e"></div><div class="t legend" style="top:441px">272 - 411.9</div>
<div class="a sw" style="top:470px;height:12px;background:#42509f"></div><div class="t legend" style="top:469px">412 - 659.9</div>
<div class="a sw" style="top:495px;height:17px;background:#3f4c9e"></div><div class="t legend" style="top:497px">660 - 1516</div>

<div class="t b" style="left:15px;top:539px;letter-spacing:.17px">World Light Gray Reference</div>
<div class="t legend" style="left:15px;top:559px">Light Gray Canvas Reference</div>

<div class="a" style="left:11px;top:818px;width:201px;height:1px;background:#bbb"></div>
<div class="t foot" style="left:13px;top:825px">Esri.com</div>
<div class="t foot" style="left:62px;top:825px">.</div>
<div class="t foot" style="left:74px;top:825px;letter-spacing:.3px">Terms of Use</div>
<div class="t foot" style="left:150px;top:825px">.</div>
<div class="t foot" style="left:162px;top:825px">Privacy</div>
<div class="t foot" style="left:14px;top:838px">Contact Us</div>
<div class="t foot" style="left:76px;top:838px">.</div>
<div class="t foot" style="left:87px;top:838px">Report Abuse</div>

<!-- divider handle -->
<div class="a" style="left:219px;top:462px;width:1px;height:14px;background:repeating-linear-gradient(#777 0 1px,#fff 1px 3px)"></div>
</body>
</html>
